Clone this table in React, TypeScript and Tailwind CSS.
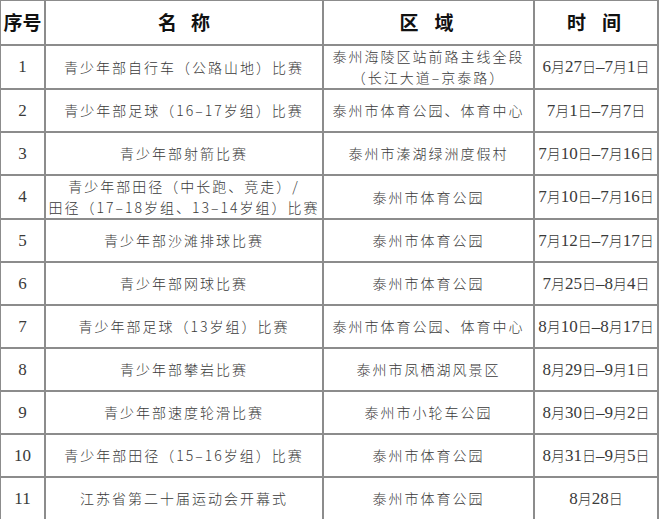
const rows: { no: string; name: string[]; area: string[]; time: string }[] = [
  { no: "1", name: ["青少年部自行车（公路山地）比赛"], area: ["泰州海陵区站前路主线全段", "（长江大道–京泰路）"], time: "6月27日–7月1日" },
  { no: "2", name: ["青少年部足球（16–17岁组）比赛"], area: ["泰州市体育公园、体育中心"], time: "7月1日–7月7日" },
  { no: "3", name: ["青少年部射箭比赛"], area: ["泰州市溱湖绿洲度假村"], time: "7月10日–7月16日" },
  { no: "4", name: ["青少年部田径（中长跑、竞走）/", "田径（17–18岁组、13–14岁组）比赛"], area: ["泰州市体育公园"], time: "7月10日–7月16日" },
  { no: "5", name: ["青少年部沙滩排球比赛"], area: ["泰州市体育公园"], time: "7月12日–7月17日" },
  { no: "6", name: ["青少年部网球比赛"], area: ["泰州市体育公园"], time: "7月25日–8月4日" },
  { no: "7", name: ["青少年部足球（13岁组）比赛"], area: ["泰州市体育公园、体育中心"], time: "8月10日–8月17日" },
  { no: "8", name: ["青少年部攀岩比赛"], area: ["泰州市凤栖湖风景区"], time: "8月29日–9月1日" },
  { no: "9", name: ["青少年部速度轮滑比赛"], area: ["泰州市小轮车公园"], time: "8月30日–9月2日" },
  { no: "10", name: ["青少年部田径（15–16岁组）比赛"], area: ["泰州市体育公园"], time: "8月31日–9月5日" },
  { no: "11", name: ["江苏省第二十届运动会开幕式"], area: ["泰州市体育公园"], time: "8月28日" },
];

const cell = "border-2 border-[#8c8c8c] text-center align-middle p-0";

// digits/dash in serif, 月 日 in smaller CJK
function Time({ text }: { text: string }) {
  const parts = text.split(/([月日])/).filter(Boolean);
  return (
    <span className="whitespace-nowrap">
      {parts.map((p, i) =>
        p === "月" || p === "日" ? (
          <span key={i} className="font-['Noto_Sans_CJK_SC',sans-serif] text-[14px] font-light">
            {p}
          </span>
        ) : (
          <span key={i} className="font-['Liberation_Serif',serif] text-[17px]">
            {p}
          </span>
        )
      )}
    </span>
  );
}

export default function App() {
  return (
    <div className="w-[660px] h-[519px] bg-white overflow-hidden">
      <table className="table-fixed border-collapse w-[658px] -mt-[1px] -ml-[1px]">
        <colgroup>
          <col className="w-[45px]" />
          <col className="w-[278px]" />
          <col className="w-[211px]" />
          <col className="w-[124px]" />
        </colgroup>
        <thead>
          <tr className="h-[45px] text-[#111] font-bold text-[19px] font-['Noto_Sans_CJK_SC',sans-serif]">
            <th className={cell}>序号</th>
            <th className={cell}>
              <span className="tracking-[14px] pl-[14px]">名称</span>
            </th>
            <th className={cell}>
              <span className="tracking-[16px] pl-[12px]">区域</span>
            </th>
            <th className={cell}>
              <span className="tracking-[16px] pl-[12px]">时间</span>
            </th>
          </tr>
        </thead>
        <tbody className="text-[#3a3a3a]">
          {rows.map((r) => (
            <tr key={r.no} className="h-[43px]">
              <td className={`${cell} font-['Liberation_Serif',serif] text-[17px]`}>{r.no}</td>
              <td className={`${cell} font-['Noto_Sans_CJK_SC',sans-serif] text-[14px] leading-[21px] tracking-[2px] font-light`}>
                {r.name.map((l) => (
                  <div key={l} className="whitespace-nowrap">{l}</div>
                ))}
              </td>
              <td className={`${cell} font-['Noto_Sans_CJK_SC',sans-serif] text-[14px] leading-[21px] tracking-[2px] font-light`}>
                {r.area.map((l) => (
                  <div key={l} className="whitespace-nowrap">{l}</div>
                ))}
              </td>
              <td className={cell}>
                <Time text={r.time} />
              </td>
            </tr>
          ))}
        </tbody>
      </table>
    </div>
  );
}
